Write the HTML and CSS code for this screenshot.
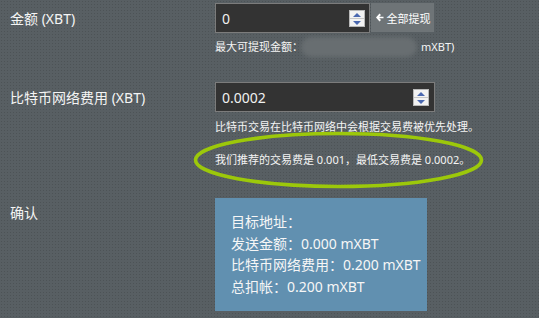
FILE: index.html
```html
<!DOCTYPE html>
<html lang="zh-CN">
<head>
<meta charset="utf-8">
<link rel="stylesheet" href="styles.css">
</head>
<body>
<div class="page">
  <div class="row row-amount">
    <div class="label">金额 (XBT)</div>
    <div class="field">
      <div class="group">
        <div class="input input-short">
          <span class="value">0</span>
          <span class="spin"><span class="up"></span><span class="down"></span></span>
        </div>
        <div class="btn">
          <svg class="arrow" width="9" height="9" viewBox="0 0 9 9"><path d="M4.5 0.5 L1 4.5 L4.5 8.5 L6 7 L4.2 5.3 H8.5 V3.7 H4.2 L6 2 Z" fill="#ffffff"/></svg>
          <span>全部提现</span>
        </div>
      </div>
      <div class="hint hint-max">最大可提现金额：<span class="blur"></span><span class="unit">mXBT)</span></div>
    </div>
  </div>

  <div class="row row-fee">
    <div class="label">比特币网络费用 (XBT)</div>
    <div class="field">
      <div class="input input-long">
        <span class="value">0.0002</span>
        <span class="spin"><span class="up"></span><span class="down"></span></span>
      </div>
      <div class="hint hint-fee">比特币交易在比特币网络中会根据交易费被优先处理。</div>
      <div class="hint hint-rec">我们推荐的交易费是 0.001，最低交易费是 0.0002。
        <svg class="ring" width="295" height="60" viewBox="0 0 295 60"><ellipse cx="147.5" cy="30" rx="143" ry="26.5" fill="none" stroke="#9cc80a" stroke-width="3.6"/></svg>
      </div>
    </div>
  </div>

  <div class="row row-confirm">
    <div class="label label-confirm">确认</div>
    <div class="field">
      <div class="summary">
        <div>目标地址：</div>
        <div>发送金额：0.000 mXBT</div>
        <div>比特币网络费用：0.200 mXBT</div>
        <div>总扣帐：0.200 mXBT</div>
      </div>
    </div>
  </div>
</div>
</body>
</html>
```

FILE: styles.css
```css
html, body {
  margin: 0;
  padding: 0;
}
body {
  width: 539px;
  height: 318px;
  overflow: hidden;
  background-color: #585f63;
  background-image: radial-gradient(rgba(0,0,0,0.13) 0.7px, transparent 1px);
  background-size: 3px 3px;
  font-family: "Noto Sans", "Noto Sans CJK SC", sans-serif;
  color: #f2f2f2;
}
.page {
  padding: 3px 0 0 10px;
}
.row {
  display: flex;
}
.label {
  width: 205px;
  flex: none;
  font-size: 14px;
  line-height: 18px;
  padding-top: 7px;
  color: #f4f4f4;
}
.field {
  display: flex;
  flex-direction: column;
}
.group {
  display: flex;
}
.input {
  box-sizing: border-box;
  height: 30px;
  background: #333333;
  border: 1px solid #7c7c7c;
  display: flex;
  align-items: center;
  justify-content: space-between;
  padding: 0 4px 0 6px;
}
.input-short { width: 155px; }
.input-long { width: 220px; padding-right: 5px; }
.value {
  font-size: 14px;
  color: #f0f0f0;
}
.spin {
  box-sizing: border-box;
  width: 16px;
  height: 17px;
  background: #f2f2f2;
  border: 1px solid #b9b9b9;
  display: flex;
  flex-direction: column;
  margin-top: 1px;
}
.spin .up, .spin .down {
  flex: 1;
  display: flex;
  align-items: center;
  justify-content: center;
}
.spin .up { border-bottom: 1px solid #c8c8c8; }
.spin .up::after {
  content: "";
  border-left: 4px solid transparent;
  border-right: 4px solid transparent;
  border-bottom: 4px solid #4a68b0;
}
.spin .down::after {
  content: "";
  border-left: 4px solid transparent;
  border-right: 4px solid transparent;
  border-top: 4px solid #4a68b0;
}
.btn {
  box-sizing: border-box;
  width: 63px;
  height: 29px;
  margin-left: 1px;
  background: #6e7477;
  display: flex;
  align-items: center;
  justify-content: center;
  gap: 3px;
  font-size: 11px;
  color: #ffffff;
}
.arrow { flex: none; }
.hint {
  font-size: 11px;
  line-height: 14px;
  color: #f4f4f4;
}
.hint-max {
  margin-top: 7px;
  height: 14px;
  display: flex;
  align-items: center;
}
.blur {
  display: inline-block;
  flex: none;
  width: 116px;
  height: 20px;
  margin: 0 4px 0 -2px;
  border-radius: 10px;
  background: #686e71;
  filter: blur(2px);
}
.unit { font-size: 11px; }
.row-fee { margin-top: 28px; }
.hint-fee { margin-top: 8px; }
.hint-rec {
  margin-top: 19px;
  position: relative;
}
.ring {
  position: absolute;
  left: -24px;
  top: -23px;
}
.row-confirm { margin-top: 31px; }
.label-confirm { padding-top: 6px; }
.summary {
  box-sizing: border-box;
  width: 212px;
  height: 113px;
  background: #6190b0;
  padding: 13px 0 0 16px;
  font-size: 14px;
  line-height: 21.5px;
  color: #f6f6f6;
}
```
